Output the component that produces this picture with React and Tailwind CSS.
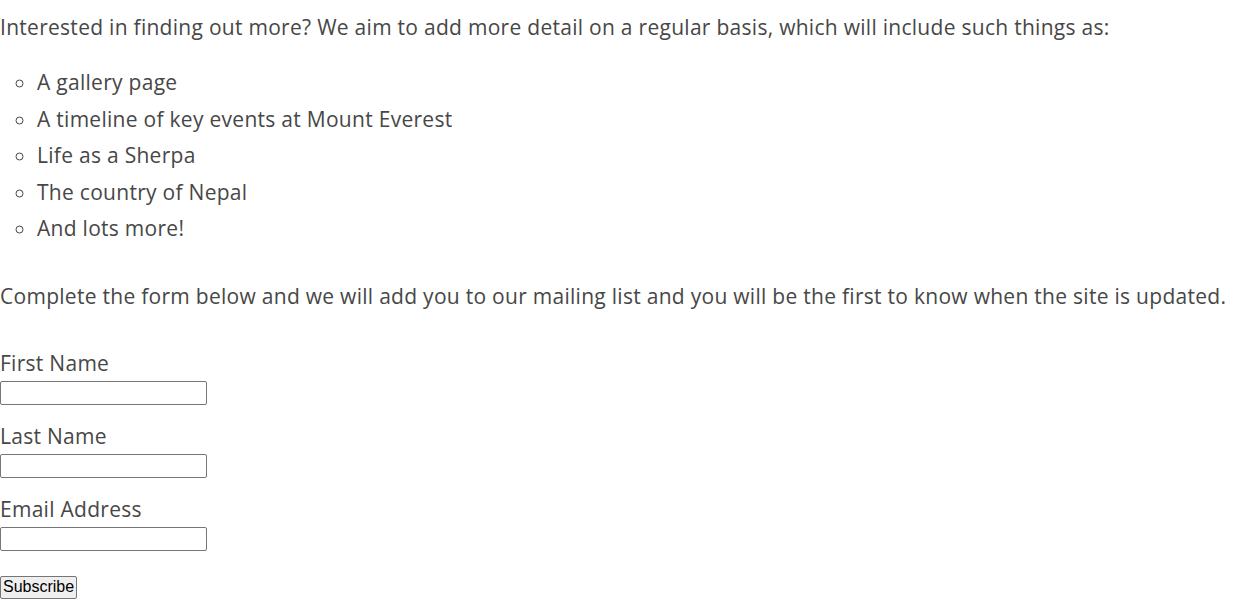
import React from 'react';

const items = [
  'A gallery page',
  'A timeline of key events at Mount Everest',
  'Life as a Sherpa',
  'The country of Nepal',
  'And lots more!',
];

const Field = ({ label, className }) => (
  <div className={`flex flex-col ${className}`}>
    <label className="leading-[30px]">{label}</label>
    <input
      type="text"
      className="mt-[3px] w-[207px] h-6 border border-[#767676] rounded-[2px] bg-white"
    />
  </div>
);

const App = () => {
  return (
    <div className="min-h-screen bg-white text-[#474747] text-[21px] font-['Open_Sans',sans-serif] tracking-[0.28px]">
      <p className="pt-3 leading-[30px]">
        Interested in finding out more? We aim to add more detail on a regular basis, which will include such things as:
      </p>

      <ul className="mt-[22px] pl-[37px] list-[circle]">
        {items.map((item) => (
          <li key={item} className="leading-[36.5px]">
            {item}
          </li>
        ))}
      </ul>

      <p className="mt-[34px] leading-[30px]">
        Complete the form below and we will add you to our mailing list and you will be the first to know when the site is updated.
      </p>

      <form className="flex flex-col">
        <Field label="First Name" className="mt-[37px]" />
        <Field label="Last Name" className="mt-4" />
        <Field label="Email Address" className="mt-4" />
        <div className="mt-[25px] flex">
          <button
            type="button"
            className="h-[23px] px-[2px] border border-[#767676] rounded-[2px] bg-[#efefef] text-black text-[16px] leading-none font-['Liberation_Sans',sans-serif] tracking-normal"
          >
            Subscribe
          </button>
        </div>
      </form>
    </div>
  );
};

export default App;
